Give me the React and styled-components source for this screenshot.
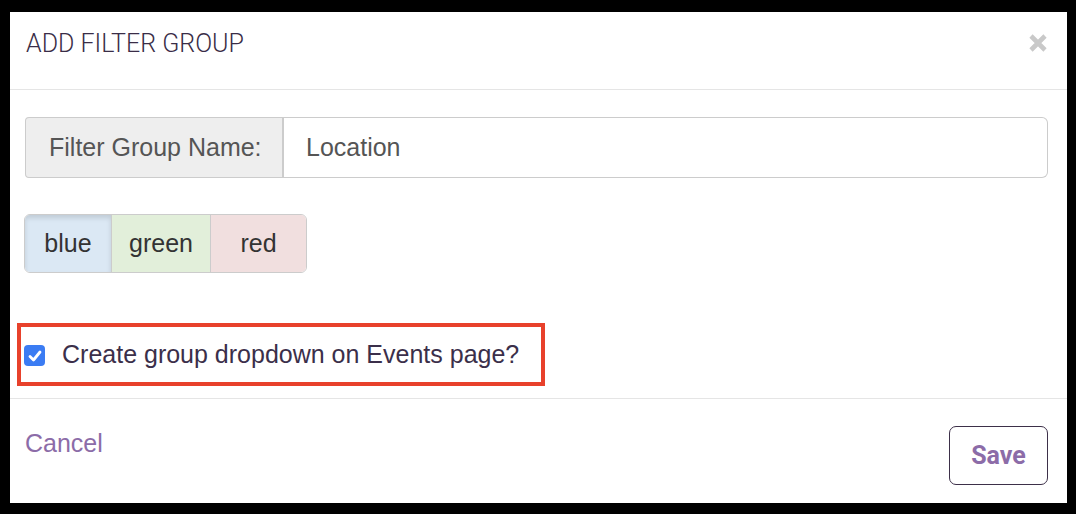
import React from 'react'
import styled, { createGlobalStyle } from 'styled-components'

const GlobalStyle = createGlobalStyle`
  html, body {
    margin: 0;
    padding: 0;
    background: #000;
  }
  * {
    box-sizing: border-box;
  }
`

const Modal = styled.div`
  margin: 12px 9px 11px 10px;
  height: 491px;
  background: #fff;
  display: flex;
  flex-direction: column;
  font-family: 'Liberation Sans', Arial, sans-serif;
`

const Header = styled.div`
  height: 78px;
  padding: 20px 19px 0 15px;
  border-bottom: 1px solid #e5e5e5;
  display: flex;
  justify-content: space-between;
  align-items: flex-start;
`

const Title = styled.h4`
  margin: 0;
  font-family: Roboto, sans-serif;
  font-weight: 300;
  font-size: 25px;
  line-height: 24px;
  color: #3a2d47;
  padding-left: 1px;
`

const Close = styled.button`
  border: none;
  background: transparent;
  padding: 0;
  margin-top: 1px;
  cursor: pointer;
  display: flex;
`

const Body = styled.div`
  padding: 27px 19px 12px 15px;
  border-bottom: 1px solid #e5e5e5;
`

const InputGroup = styled.div`
  display: flex;
  height: 61px;
`

const Addon = styled.span`
  width: 259px;
  display: flex;
  align-items: center;
  padding-left: 23px;
  background: #eee;
  border: 1px solid #ccc;
  border-right: 2px solid #ccc;
  border-radius: 4px 0 0 4px;
  font-size: 25px;
  color: #555;
`

const TextInput = styled.input`
  flex: 1;
  border: 1px solid #ccc;
  border-left: none;
  border-radius: 0 6px 6px 0;
  padding: 0 0 0 22px;
  font-family: 'Liberation Sans', Arial, sans-serif;
  font-size: 25px;
  color: #555;
  outline: none;
`

const ButtonGroup = styled.div`
  display: inline-flex;
  margin-top: 36px;
  margin-left: -1px;
  height: 59px;
  border: 1px solid #ccc;
  border-radius: 6px;
  overflow: hidden;
`

const ColorButton = styled.button`
  width: ${(p) => p.$width}px;
  border: none;
  border-left: ${(p) => (p.$first ? 'none' : '1px solid #ccc')};
  background: ${(p) => p.$bg};
  box-shadow: ${(p) => (p.$active ? 'inset 0 3px 5px rgba(0,0,0,0.125)' : 'none')};
  font-family: 'Liberation Sans', Arial, sans-serif;
  font-size: 25px;
  color: #333;
  padding: 0;
  cursor: pointer;
`

const Highlight = styled.div`
  margin-top: 50px;
  margin-left: -8px;
  width: 528px;
  height: 63px;
  border: 4px solid #e8412b;
  display: flex;
  align-items: center;
`

const CheckLabel = styled.label`
  display: flex;
  align-items: center;
  gap: 17px;
  padding-left: 3px;
  font-size: 25px;
  color: #3b2f4a;
  cursor: pointer;
`

const CheckBox = styled.span`
  width: 21px;
  height: 21px;
  border-radius: 4px;
  background: #3b7cf3;
  display: flex;
  align-items: center;
  justify-content: center;
  margin-top: 2px;
`

const Footer = styled.div`
  flex: 1;
  padding: 27px 19px 18px 15px;
  display: flex;
  justify-content: space-between;
  align-items: flex-start;
`

const CancelLink = styled.a`
  margin-top: 3px;
  font-size: 25px;
  color: #8c6ca8;
  text-decoration: none;
  cursor: pointer;
`

const SaveButton = styled.button`
  width: 99px;
  height: 59px;
  border: 1px solid #3d3049;
  border-radius: 7px;
  background: #fff;
  font-family: Roboto, sans-serif;
  font-weight: 700;
  font-size: 25px;
  color: #8c6ca8;
  cursor: pointer;
`

const colors = [
  { name: 'blue', bg: '#dbe8f4', width: 86, active: true },
  { name: 'green', bg: '#e2efda', width: 99 },
  { name: 'red', bg: '#f1dfdf', width: 96 },
]

const App = () => {
  return (
    <>
      <GlobalStyle />
      <Modal>
        <Header>
          <Title>ADD FILTER GROUP</Title>
          <Close aria-label="Close">
            <svg width="20" height="20" viewBox="0 0 20 20">
              <path d="M3 3 L17 17 M17 3 L3 17" stroke="#c9c9c9" strokeWidth="4.6" />
            </svg>
          </Close>
        </Header>
        <Body>
          <InputGroup>
            <Addon>Filter Group Name:</Addon>
            <TextInput defaultValue="Location" />
          </InputGroup>
          <ButtonGroup>
            {colors.map((c, i) => (
              <ColorButton
                key={c.name}
                $bg={c.bg}
                $width={c.width}
                $first={i === 0}
                $active={c.active}
              >
                {c.name}
              </ColorButton>
            ))}
          </ButtonGroup>
          <Highlight>
            <CheckLabel>
              <CheckBox>
                <svg width="16" height="16" viewBox="0 0 16 16">
                  <path
                    d="M3 8.5 L6.5 12 L13 4"
                    fill="none"
                    stroke="#fff"
                    strokeWidth="2.8"
                    strokeLinecap="round"
                    strokeLinejoin="round"
                  />
                </svg>
              </CheckBox>
              Create group dropdown on Events page?
            </CheckLabel>
          </Highlight>
        </Body>
        <Footer>
          <CancelLink>Cancel</CancelLink>
          <SaveButton>Save</SaveButton>
        </Footer>
      </Modal>
    </>
  )
}

export default App
